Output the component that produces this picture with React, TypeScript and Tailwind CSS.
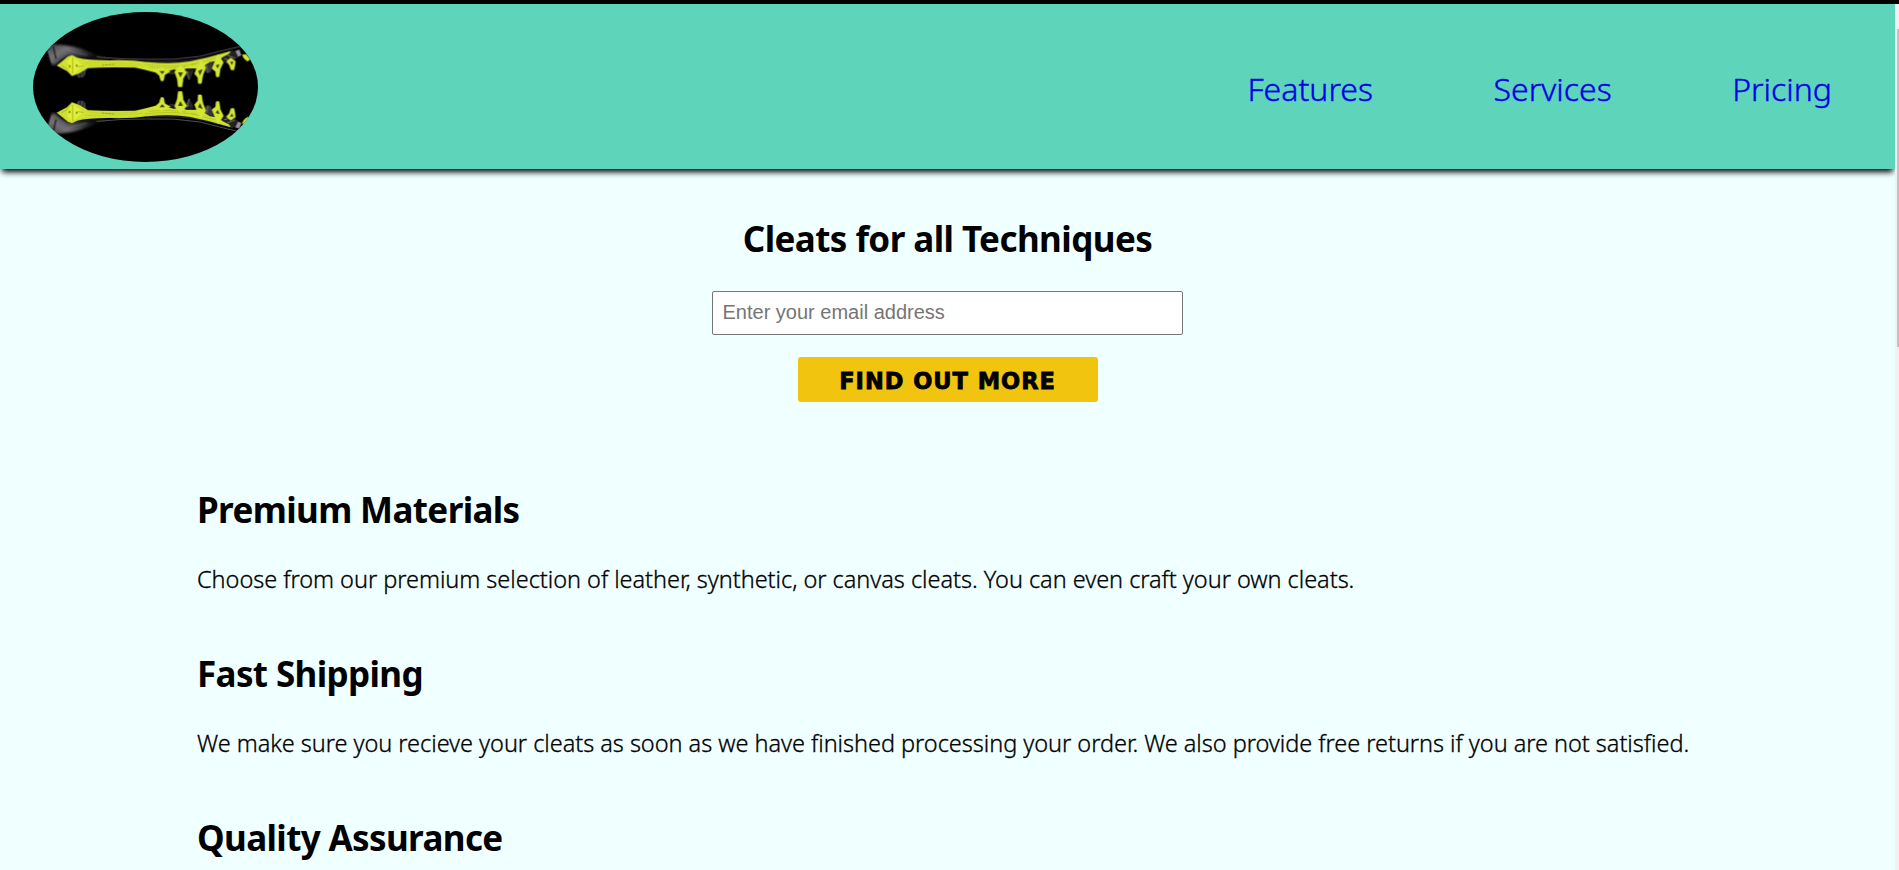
const NAV_LINKS = ["Features", "Services", "Pricing"];

const FEATURES = [
  {
    title: "Premium Materials",
    text: "Choose from our premium selection of leather, synthetic, or canvas cleats. You can even craft your own cleats.",
  },
  {
    title: "Fast Shipping",
    text: "We make sure you recieve your cleats as soon as we have finished processing your order. We also provide free returns if you are not satisfied.",
  },
  {
    title: "Quality Assurance",
    text: "",
  },
];

/* One cleat seen from the side; the logo shows it twice, mirrored. */
function Cleat() {
  return (
    <g>
      {/* grey upper of the shoe */}
      <path
        d="M142 150 L150 134 L178 134 Q225 138 262 154 Q300 168 340 176 L300 182 L235 172 L205 166 L182 180 L168 194 L156 196Z"
        fill="url(#upper)"
        filter="url(#haze)"
      />
      <path d="M146 152 L157 188" stroke="#8b8690" strokeWidth="4" opacity="0.7" />
      <path d="M160 140 L168 176" stroke="#000" strokeWidth="5" opacity="0.6" />
      <path d="M200 150 L262 166" stroke="#9a9a9e" strokeWidth="5" opacity="0.2" />
      <path d="M290 171 Q370 179 440 178 Q520 182 600 169 Q660 153 722 139" fill="none" stroke="#55505a" strokeWidth="3" />
      <path d="M440 184 Q530 190 610 175 L700 153" fill="none" stroke="#232325" strokeWidth="5" />

      {/* grey studs behind the plate */}
      <path d="M226 216 L260 207 L252 232 L234 234Z" fill="#29272c" />
      <path d="M232 216 L238 232 M243 213 L247 232 M253 210 L254 226" stroke="#625e67" strokeWidth="2.5" />
      <path d="M500 208 L560 196 L582 210 L568 242 L556 222 L510 224Z" fill="#26262a" />
      <path d="M606 200 L640 184 L632 218 L620 220Z" fill="#38363d" />
      <path d="M660 166 L712 150 L722 166 L702 182 L678 192Z" fill="#232226" />
      <path d="M672 176 L698 182 M682 166 L704 174 M562 214 L567 238 M620 196 L624 216" stroke="#6f6a74" strokeWidth="3" />
      <path d="M706 153 L718 149 L724 166 L714 170Z" fill="#958f99" />

      {/* sole plate */}
      <path
        d="M170 197 L204 169 L216 165 L232 173 Q260 181 330 181 Q390 179 450 187 Q520 192 570 184 Q630 172 692 153 L688 161 L668 171 L655 182 L630 186 L614 196 L592 206 L560 205 L545 211 L520 209 L490 216 L464 217 Q430 208 405 203 Q335 200 264 204 L239 219 L216 228 L201 213Z"
        fill="#cfe130"
      />
      <path d="M202 184 L216 169 L232 182 L250 198 L218 224 L204 204Z" fill="#e1ef37" />
      <path d="M206 194 l6 5 -4 5 z M228 192 l5 4 -4 6 z" fill="#59600f" />
      <path d="M184 196 L204 209 M218 172 L218 220 M234 200 L250 198" stroke="#a8b725" strokeWidth="3" />
      <path d="M256 189 Q340 186 430 195 M268 197 Q340 193 410 199" fill="none" stroke="#b1c026" strokeWidth="3" strokeDasharray="3 4" />
      <path d="M306 196 L342 193" stroke="#8c9722" strokeWidth="3" strokeDasharray="7 3" />
      <path
        d="M435 193 Q520 203 590 191 M448 201 Q510 207 560 199 M575 194 L650 174"
        fill="none"
        stroke="#97a423"
        strokeWidth="3"
        strokeDasharray="3 4"
      />

      {/* studs: wide at the plate, narrowing to a blunt tip */}
      <g fill="#d4e735" stroke="#d4e735" strokeWidth="2" strokeLinejoin="round">
        <path d="M460 211 L485 203 L510 215 L494 224 L490 242 L483 242 L478 226Z" />
        <path d="M524 215 L541 196 L560 217 L549 236 L546 260 L535 260 L532 237Z" />
        <path d="M584 221 L590 206 L603 178 L617 203 L608 226 L604 250 L595 250 L594 233Z" />
        <path d="M636 206 L643 188 L654 163 L670 187 L660 207 L657 230 L649 230 L647 214Z" />
        <path d="M680 184 L692 174 L706 184 L702 209 L693 209 L689 196Z" />
        <path d="M727 165 L738 163 L750 178 L742 183 L733 176Z" />
      </g>
      <g fill="#3a400e">
        <path d="M478 213 L494 213 L487 222Z M534 217 L549 217 L541 232Z M594 213 L608 207 L600 226Z M647 196 L659 192 L653 206Z M690 185 L700 185 L696 195Z" />
      </g>
      <path d="M512 212 L526 209 L524 215 L514 218Z M560 207 L582 207 L578 213 L562 212Z" fill="#15170b" />
    </g>
  );
}

function Logo() {
  return (
    <svg viewBox="99 36 675 450" className="h-[150px] w-[225px]" role="img">
      <defs>
        <clipPath id="oval">
          <ellipse cx="436.5" cy="261" rx="337.5" ry="225" />
        </clipPath>
        <linearGradient id="upper" x1="0" y1="0" x2="1" y2="0.5">
          <stop offset="0" stopColor="#3a393d" />
          <stop offset="0.3" stopColor="#747378" />
          <stop offset="0.8" stopColor="#0b0b0b" />
        </linearGradient>
        <filter id="haze">
          <feGaussianBlur stdDeviation="3" />
        </filter>
        <filter id="soften">
          <feGaussianBlur stdDeviation="1.5" />
        </filter>
      </defs>
      <g clipPath="url(#oval)">
        <rect x="99" y="36" width="675" height="450" fill="#000" />
        <g filter="url(#soften)">
          <Cleat />
          <g transform="translate(0 535) scale(1 -1)">
            <Cleat />
          </g>
        </g>
      </g>
    </svg>
  );
}

export default function App() {
  return (
    <div className="flex h-[870px] flex-col overflow-hidden bg-[#f0ffff] font-['Noto_Sans',sans-serif] text-black">
      <div className="h-1 shrink-0 bg-black" />
      <div className="flex min-h-0 flex-1">
        <div className="min-w-0 flex-1 overflow-hidden">
          <header className="flex h-[165px] items-center justify-between bg-[#5ed4ba] pr-[63px] pl-[33px] shadow-[0_5px_6px_-2px_#000]">
            <Logo />
            <nav className="flex gap-[120.5px] pt-1 text-[32px] leading-9 font-light text-[#0000e6] [-webkit-text-stroke:0.4px_#0000e6]">
              {NAV_LINKS.map((label) => (
                <a key={label} href="#">
                  {label}
                </a>
              ))}
            </nav>
          </header>

          <section className="flex flex-col items-center pt-[52px]">
            <h1 className="text-[35px] leading-9 font-bold tracking-[-0.57px]">Cleats for all Techniques</h1>
            <input
              type="email"
              placeholder="Enter your email address"
              className="mt-[34px] h-11 w-[471px] rounded-[2px] border border-[#767676] bg-white px-[9.5px] pb-px font-['Liberation_Sans',sans-serif] text-xl placeholder:text-[#757575]"
            />
            <button className="mt-[22px] h-[45px] w-[300px] rounded-[3px] bg-[#f1c40f] pt-[3px] font-['DejaVu_Sans',sans-serif] text-[22.5px] leading-6 font-bold tracking-[0.98px] [-webkit-text-stroke:0.8px_#000]">
              FIND OUT MORE
            </button>
          </section>

          <section className="flex flex-col gap-[61px] pt-[90px] pl-[197px]">
            {FEATURES.map(({ title, text }) => (
              <article key={title}>
                <h2 className="text-[35px] leading-9 font-bold tracking-[-0.63px]">{title}</h2>
                {text && (
                  <p className="mt-[35px] text-[23.5px] leading-8 font-light tracking-[-0.036px] whitespace-nowrap [-webkit-text-stroke:0.3px_#000]">
                    {text}
                  </p>
                )}
              </article>
            ))}
          </section>
        </div>
        <div className="flex w-1 justify-end bg-[#f1f1f1] pt-[25px]">
          <div className="h-[318px] w-0.5 bg-[#c1c1c1]" />
        </div>
      </div>
    </div>
  );
}
